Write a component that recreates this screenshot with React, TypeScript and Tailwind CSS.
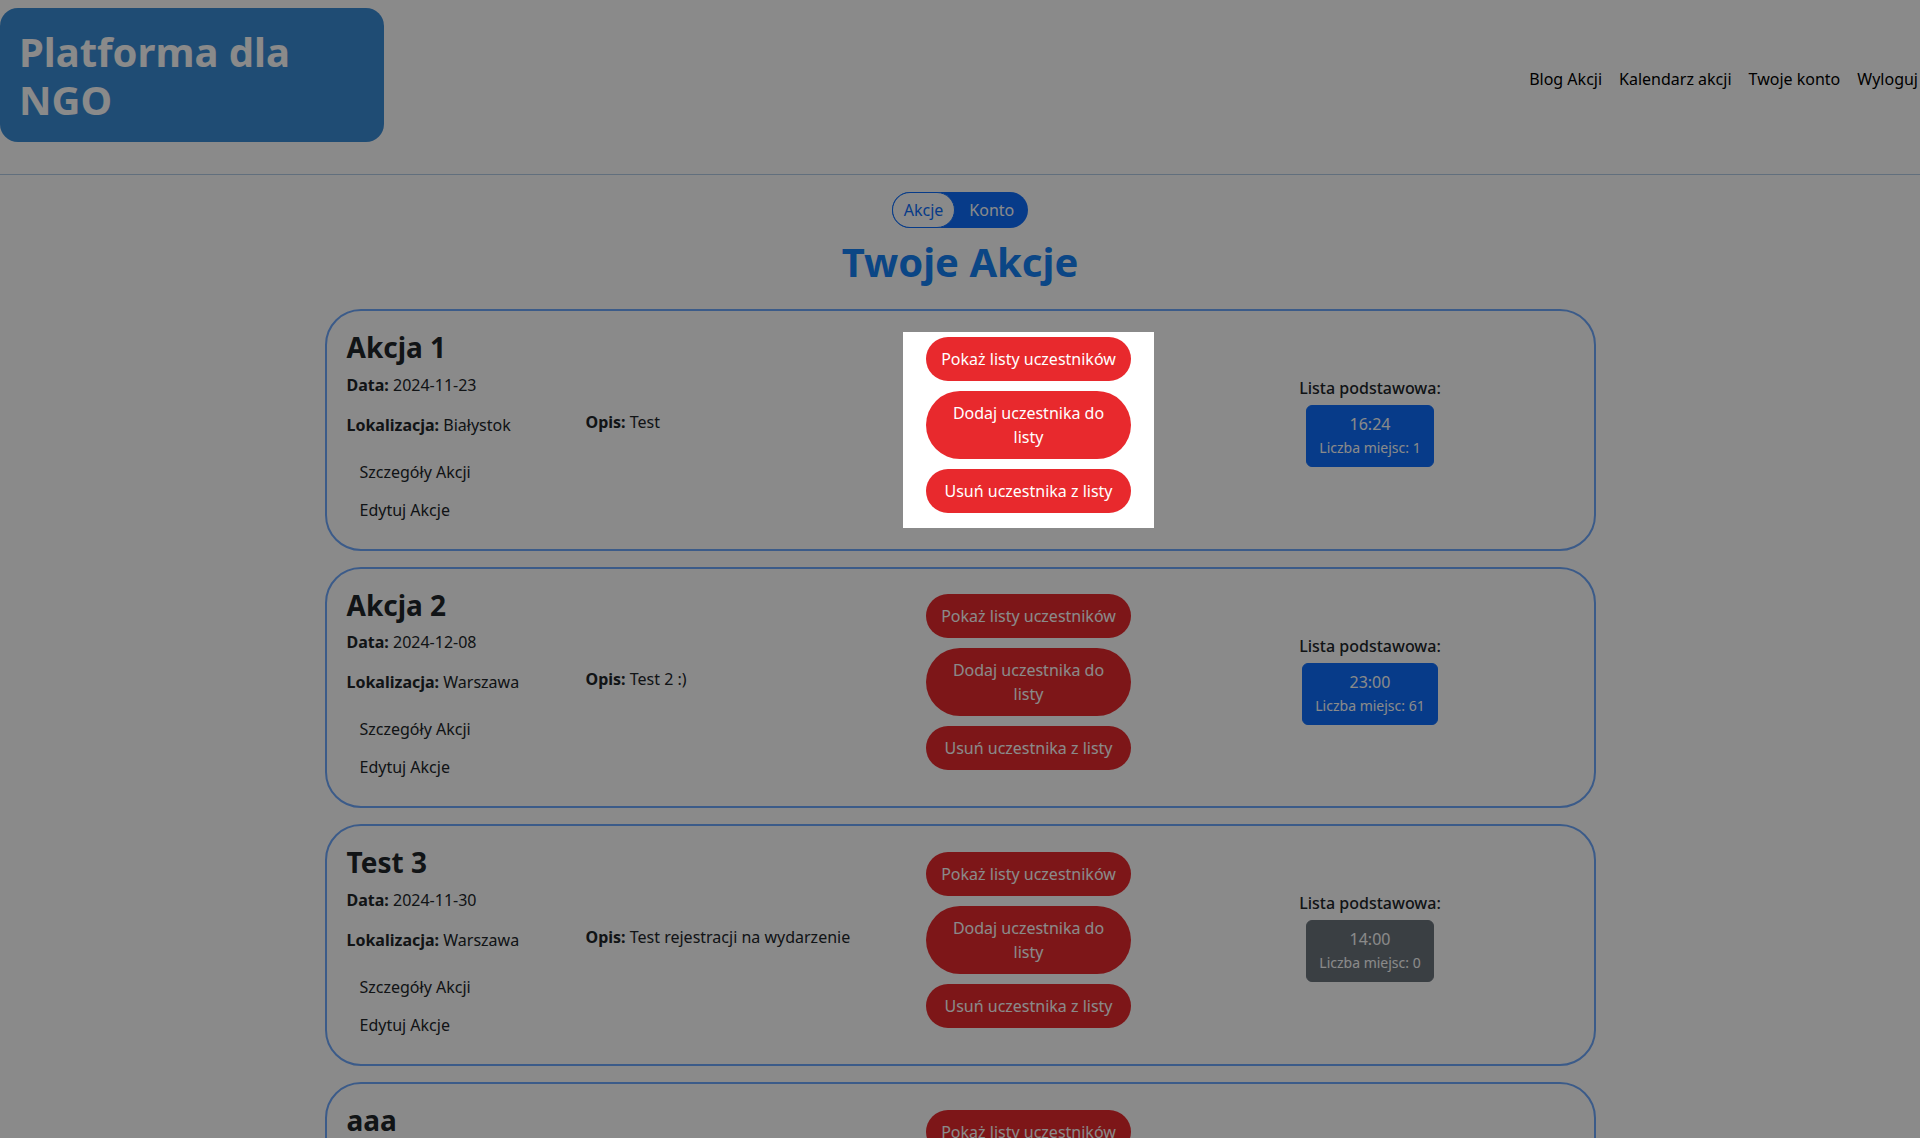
import React from 'react';

type Akcja = {
  name: string;
  date: string;
  location: string;
  desc: string;
  time: string;
  seats: number;
  highlight?: boolean;
};

const akcje: Akcja[] = [
  { name: 'Akcja 1', date: '2024-11-23', location: 'Białystok', desc: 'Test', time: '16:24', seats: 1, highlight: true },
  { name: 'Akcja 2', date: '2024-12-08', location: 'Warszawa', desc: 'Test 2 :)', time: '23:00', seats: 61 },
  { name: 'Test 3', date: '2024-11-30', location: 'Warszawa', desc: 'Test rejestracji na wydarzenie', time: '14:00', seats: 0 },
  { name: 'aaa', date: '2024-12-14', location: 'Kraków', desc: 'aaa', time: '10:00', seats: 5 },
];

function RedButton({ children }: { children: React.ReactNode }) {
  return (
    <button className="w-[205px] mb-[10px] rounded-full bg-[#e8292d] text-white px-[15px] py-[10px] leading-6 text-base">
      {children}
    </button>
  );
}

function AkcjaCard({ a }: { a: Akcja }) {
  return (
    <div className="border-2 border-[#6ea8fe] rounded-[36px] p-5 flex items-center">
      <div className="w-[239px] shrink-0">
        <h3 className="text-[28px] font-bold leading-[1.2] mb-2">{a.name}</h3>
        <p className="mb-4 leading-6"><span className="font-bold">Data:</span> {a.date}</p>
        <p className="mb-4 leading-6"><span className="font-bold">Lokalizacja:</span> {a.location}</p>
        <a className="block px-3 py-[6px] leading-6 border border-transparent">Szczegóły Akcji</a>
        <a className="block px-3 py-[6px] leading-6 border border-transparent">Edytuj Akcje</a>
      </div>
      <div className="w-[272px] shrink-0">
        <p className="mb-4 leading-6"><span className="font-bold">Opis:</span> {a.desc}</p>
      </div>
      <div className="w-[342px] shrink-0 flex justify-center">
        <div className={a.highlight ? 'relative z-20 bg-white px-[23px] py-[5px] flex flex-col' : 'px-[23px] py-[5px] flex flex-col'}>
          <RedButton>Pokaż listy uczestników</RedButton>
          <RedButton>Dodaj uczestnika do listy</RedButton>
          <RedButton>Usuń uczestnika z listy</RedButton>
        </div>
      </div>
      <div className="w-[341px] shrink-0 flex flex-col items-center">
        <p className="font-medium leading-6 mb-[5px]">Lista podstawowa:</p>
        <div className={(a.seats > 0 ? 'bg-[#0d6efd] border-[#0d6efd]' : 'bg-[#6c757d] border-[#6c757d]') + ' mb-4 rounded-md border px-3 py-[6px] text-white text-center'}>
          <div className="leading-6">{a.time}</div>
          <div className="text-sm leading-6">Liczba miejsc: {a.seats}</div>
        </div>
      </div>
    </div>
  );
}

export default function App() {
  return (
    <div className="min-h-screen bg-white text-[#212529] font-['Noto_Sans',sans-serif] text-base">
      <header className="flex justify-between items-center pt-2 pb-8 border-b border-[#b4cde8]">
        <div className="w-[384px] px-[19px] pt-[20px] pb-[18px] rounded-[18px] bg-[#3a8cd7] text-white font-bold text-[40px] leading-[48px]">
          Platforma dla NGO
        </div>
        <nav className="flex gap-[17px] mt-[7px] mr-[2px] text-black whitespace-nowrap">
          <a>Blog Akcji</a>
          <a>Kalendarz akcji</a>
          <a>Twoje konto</a>
          <a>Wyloguj</a>
        </nav>
      </header>

      <div className="flex justify-center mt-[17px]">
        <div className="flex rounded-full bg-[#0d6efd]">
          <span className="rounded-full bg-white border border-[#0d6efd] text-[#0d6efd] px-[11px] py-[5px] leading-6">Akcje</span>
          <span className="text-white pl-[14px] pr-[14px] py-[6px] leading-6">Konto</span>
        </div>
      </div>

      <h1 className="text-center text-[40px] font-bold leading-[1.2] text-[#1581f5] mt-[10px] mb-[23px]">Twoje Akcje</h1>

      <div className="w-[1271px] mx-auto flex flex-col gap-4 pb-10">
        {akcje.map((a) => (
          <AkcjaCard key={a.name} a={a} />
        ))}
      </div>

      <div className="fixed inset-0 bg-black/[0.46] z-10" />
    </div>
  );
}
